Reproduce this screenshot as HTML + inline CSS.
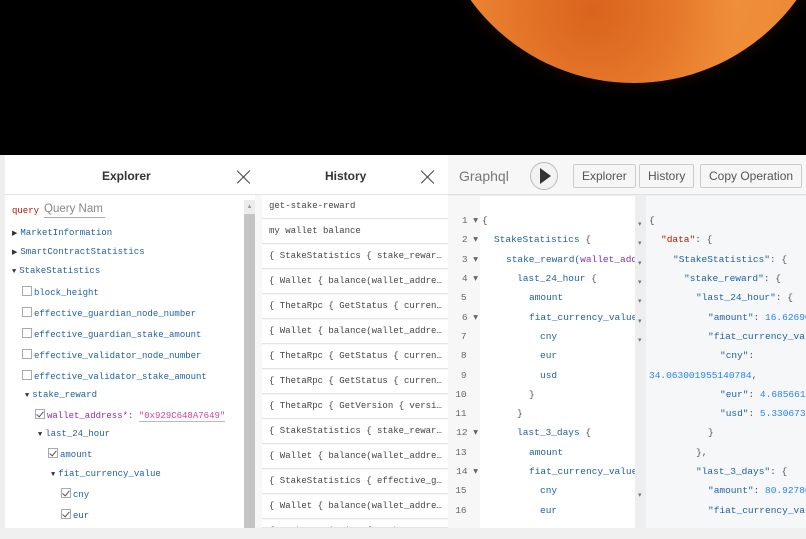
<!DOCTYPE html>
<html><head><meta charset="utf-8"><style>
*{margin:0;padding:0;box-sizing:border-box}
body{width:806px;height:539px;overflow:hidden;background:#000;position:relative;font-family:"Liberation Sans",sans-serif}
.a{position:absolute;white-space:nowrap}
.m{font-family:"Liberation Mono",monospace}
.moon{position:absolute;left:432px;top:-320px;width:403px;height:403px;border-radius:50%;background:radial-gradient(circle at 40% 82%,#d9631c 0%,#e5772a 20%,transparent 35%),radial-gradient(circle at 50% 70%,#f39a45 0%,#ec8733 55%,#e5772a 85%,#dc6d22 100%);box-shadow:0 0 14px 4px #140902}
.ex{color:#1f61a0;font-size:9px}
.cb{display:inline-block;width:10px;height:10px;border:1px solid #aaa;background:#fff;vertical-align:-1px;margin-right:2px;position:relative}
.cb.c::after{content:"";position:absolute;left:2px;top:0px;width:3px;height:6px;border:solid #555;border-width:0 1.3px 1.3px 0;transform:rotate(40deg)}
.tri{display:inline-block;font-size:7px;color:#333;margin-right:3px}
.hi{position:absolute;left:262px;width:186px;height:24px;background:#fff;border-bottom:1px solid #e4e4e4;font-size:9px;color:#444;padding:6px 0 0 7px;overflow:hidden;white-space:nowrap}
.ln{position:absolute;left:452px;width:26px;text-align:right;font-size:9.5px;color:#666;white-space:nowrap}
.ed{position:absolute;font-size:9.5px;color:#1f61a0;white-space:nowrap}
.rs{position:absolute;font-size:9.5px;color:#1f61a0;white-space:nowrap}
.btn{position:absolute;top:164px;height:24px;border:1px solid #ccc;background:#f6f6f6;font-size:12px;color:#555;padding:0 8px;line-height:22px;border-radius:2px;white-space:nowrap}
.x{position:absolute;width:14px;height:14px}
.x::before,.x::after{content:"";position:absolute;left:6px;top:-2px;width:1.3px;height:18px;background:#444;transform:rotate(45deg)}
.x::after{transform:rotate(-45deg)}
</style></head><body>
<div class="moon"></div>
<div class="a" style="left:0;top:155px;width:806px;height:384px;background:#eeeeee"></div>
<!-- explorer -->
<div class="a" style="left:5px;top:155px;width:250px;height:373px;background:#fff"></div>
<div class="a" style="left:5px;top:194px;width:250px;height:1px;background:#e2e2e2"></div>
<div class="a" style="left:102px;top:169px;font-size:12px;font-weight:bold;color:#333">Explorer</div>
<div class="x" style="left:237px;top:170px"></div>
<div class="a" style="left:244px;top:200px;width:11px;height:328px;background:#c4c4c4"></div>
<div class="a" style="left:244px;top:200px;width:11px;height:14px;background:#ececec;color:#999;font-size:6px;text-align:center;line-height:14px">▲</div>
<div class="a m" style="left:12px;top:206px;font-size:9px;color:#b11a04">query</div>
<div class="a" style="left:44px;top:203px;font-size:11.5px;color:#888;border-bottom:1px solid #aaa;width:61px;height:15px">Query Nam</div>
<div class="a m ex" style="left:12px;top:228px"><span class="tri">▶</span>MarketInformation</div>
<div class="a m ex" style="left:12px;top:247px"><span class="tri">▶</span>SmartContractStatistics</div>
<div class="a m ex" style="left:12px;top:266px"><span class="tri">▼</span>StakeStatistics</div>
<div class="a m ex" style="left:22px;top:286px"><span class="cb"></span>block_height</div>
<div class="a m ex" style="left:22px;top:307px"><span class="cb"></span>effective_guardian_node_number</div>
<div class="a m ex" style="left:22px;top:328px"><span class="cb"></span>effective_guardian_stake_amount</div>
<div class="a m ex" style="left:22px;top:349px"><span class="cb"></span>effective_validator_node_number</div>
<div class="a m ex" style="left:22px;top:370px"><span class="cb"></span>effective_validator_stake_amount</div>
<div class="a m ex" style="left:25px;top:390px"><span class="tri">▼</span>stake_reward</div>
<div class="a m ex" style="left:35px;top:409px;color:#8b2bb9"><span class="cb c"></span>wallet_address*: <span style="color:#d64292;border-bottom:1px solid #bbb">"0x929C648A7649<span style="color:#d64292">"</span></span></div>
<div class="a m ex" style="left:38px;top:429px"><span class="tri">▼</span>last_24_hour</div>
<div class="a m ex" style="left:48px;top:448px"><span class="cb c"></span>amount</div>
<div class="a m ex" style="left:51px;top:469px"><span class="tri">▼</span>fiat_currency_value</div>
<div class="a m ex" style="left:61px;top:488px"><span class="cb c"></span>cny</div>
<div class="a m ex" style="left:61px;top:509px"><span class="cb c"></span>eur</div>
<!-- history -->
<div class="a" style="left:255px;top:155px;width:193px;height:373px;background:#f7f7f7"></div>
<div class="a" style="left:255px;top:155px;width:193px;height:40px;background:#fff;border-bottom:1px solid #e2e2e2"></div>
<div class="a" style="left:325px;top:169px;font-size:12px;font-weight:bold;color:#333">History</div>
<div class="x" style="left:421px;top:170px"></div>
<div class="hi m" style="top:195px">get-stake-reward</div>
<div class="hi m" style="top:220px">my wallet balance</div>
<div class="hi m" style="top:245px">{ StakeStatistics { stake_rewar…</div>
<div class="hi m" style="top:270px">{ Wallet { balance(wallet_addre…</div>
<div class="hi m" style="top:295px">{ ThetaRpc { GetStatus { curren…</div>
<div class="hi m" style="top:320px">{ Wallet { balance(wallet_addre…</div>
<div class="hi m" style="top:345px">{ ThetaRpc { GetStatus { curren…</div>
<div class="hi m" style="top:370px">{ ThetaRpc { GetStatus { curren…</div>
<div class="hi m" style="top:395px">{ ThetaRpc { GetVersion { versi…</div>
<div class="hi m" style="top:420px">{ StakeStatistics { stake_rewar…</div>
<div class="hi m" style="top:445px">{ Wallet { balance(wallet_addre…</div>
<div class="hi m" style="top:470px">{ StakeStatistics { effective_g…</div>
<div class="hi m" style="top:495px">{ Wallet { balance(wallet_addre…</div>
<div class="hi m" style="top:520px;height:8px">{ StakeStatistics { stake_…</div>
<!-- graphql -->
<div class="a" style="left:448px;top:155px;width:358px;height:40px;background:#f7f7f7;border-bottom:1px solid #e0e0e0"></div>
<div class="a" style="left:459px;top:168px;font-size:14px;color:#777">Graphql</div>
<div class="a" style="left:530px;top:162px;width:28px;height:28px;border-radius:50%;border:1px solid #bbb;background:#f2f2f2"></div>
<div class="a" style="left:540px;top:168px;width:0;height:0;border-left:11px solid #333;border-top:8px solid transparent;border-bottom:8px solid transparent"></div>
<div class="btn" style="left:573px">Explorer</div>
<div class="btn" style="left:639px">History</div>
<div class="btn" style="left:700px">Copy Operation</div>
<div class="a" style="left:448px;top:196px;width:32px;height:332px;background:#f7f7f7"></div>
<div class="a" style="left:480px;top:196px;width:155px;height:332px;background:#fff"></div>
<div class="a" style="left:635px;top:196px;width:11px;height:332px;background:#eeeeee"></div>
<div class="a" style="left:646px;top:196px;width:160px;height:332px;background:#f6f7f8"></div>
<div class="ln m" style="top:215px">1 ▾</div><div class="ln m" style="top:234px">2 ▾</div><div class="ln m" style="top:254px">3 ▾</div><div class="ln m" style="top:273px">4 ▾</div><div class="ln m" style="top:292px">5&nbsp;&nbsp;</div><div class="ln m" style="top:312px">6 ▾</div><div class="ln m" style="top:331px">7&nbsp;&nbsp;</div><div class="ln m" style="top:350px">8&nbsp;&nbsp;</div><div class="ln m" style="top:370px">9&nbsp;&nbsp;</div><div class="ln m" style="top:389px">10&nbsp;&nbsp;</div><div class="ln m" style="top:408px">11&nbsp;&nbsp;</div><div class="ln m" style="top:427px">12 ▾</div><div class="ln m" style="top:447px">13&nbsp;&nbsp;</div><div class="ln m" style="top:466px">14 ▾</div><div class="ln m" style="top:485px">15&nbsp;&nbsp;</div><div class="ln m" style="top:505px">16&nbsp;&nbsp;</div>
<div style="position:absolute;left:481px;top:196px;width:154px;height:332px;overflow:hidden">
<div class="ed m" style="left:1px;top:19px;color:#555">{</div>
<div class="ed m" style="left:13px;top:38px">StakeStatistics <span style="color:#555">{</span></div>
<div class="ed m" style="left:25px;top:58px">stake_reward(<span style="color:#8b2bb9">wallet_address</span></div>
<div class="ed m" style="left:36px;top:77px">last_24_hour <span style="color:#555">{</span></div>
<div class="ed m" style="left:48px;top:96px">amount</div>
<div class="ed m" style="left:48px;top:116px">fiat_currency_value</div>
<div class="ed m" style="left:59px;top:135px">cny</div>
<div class="ed m" style="left:59px;top:154px">eur</div>
<div class="ed m" style="left:59px;top:174px">usd</div>
<div class="ed m" style="left:48px;top:193px;color:#555">}</div>
<div class="ed m" style="left:36px;top:212px;color:#555">}</div>
<div class="ed m" style="left:36px;top:231px">last_3_days <span style="color:#555">{</span></div>
<div class="ed m" style="left:48px;top:251px">amount</div>
<div class="ed m" style="left:48px;top:270px">fiat_currency_value</div>
<div class="ed m" style="left:59px;top:289px">cny</div>
<div class="ed m" style="left:59px;top:309px">eur</div>
</div>
<div class="a" style="left:638px;top:215px;font-size:7px;color:#777;line-height:19.35px">▾<br>▾<br>▾<br>▾<br>▾<br>▾<br>▾<br><br><br><br><br><br><br><br>▾</div>
<div style="position:absolute;left:646px;top:196px;width:160px;height:332px;overflow:hidden">
<div class="rs m" style="left:3px;top:19px;color:#555">{</div>
<div class="rs m" style="left:15px;top:38px"><span style="color:#b11a04">"data"</span><span style="color:#555">: {</span></div>
<div class="rs m" style="left:27px;top:58px">"StakeStatistics"<span style="color:#555">: {</span></div>
<div class="rs m" style="left:38px;top:77px">"stake_reward"<span style="color:#555">: {</span></div>
<div class="rs m" style="left:50px;top:96px">"last_24_hour"<span style="color:#555">: {</span></div>
<div class="rs m" style="left:62px;top:116px">"amount"<span style="color:#555">: </span><span style="color:#2882f9">16.62690</span></div>
<div class="rs m" style="left:62px;top:135px">"fiat_currency_value"</div>
<div class="rs m" style="left:74px;top:154px">"cny"<span style="color:#555">:</span></div>
<div class="rs m" style="left:3px;top:174px;color:#2882f9">34.063001955140784<span style="color:#555">,</span></div>
<div class="rs m" style="left:74px;top:193px">"eur"<span style="color:#555">: </span><span style="color:#2882f9">4.6856617</span></div>
<div class="rs m" style="left:74px;top:212px">"usd"<span style="color:#555">: </span><span style="color:#2882f9">5.3306732</span></div>
<div class="rs m" style="left:62px;top:231px;color:#555">}</div>
<div class="rs m" style="left:50px;top:251px;color:#555">},</div>
<div class="rs m" style="left:50px;top:270px">"last_3_days"<span style="color:#555">: {</span></div>
<div class="rs m" style="left:62px;top:289px">"amount"<span style="color:#555">: </span><span style="color:#2882f9">80.92780</span></div>
<div class="rs m" style="left:62px;top:309px">"fiat_currency_value"</div>
</div>
<div class="a" style="left:0;top:528px;width:806px;height:11px;background:#f0f0f0"></div>
</body></html>
